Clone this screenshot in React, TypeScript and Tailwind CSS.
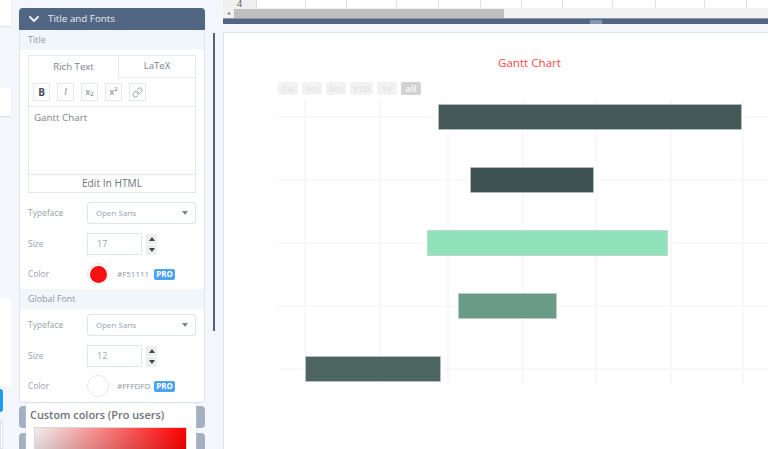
import { ChevronDown, Link } from "lucide-react"

const font = "font-['Open_Sans','Noto_Sans',sans-serif]"

function SelectRow({ value }: { value: string }) {
  return (
    <div className="flex h-[22px] w-[109px] items-center justify-between rounded-[3px] border border-[#dfe5ee] bg-white pl-[8px] pr-[7px] text-[8px] text-[#9aa1ab]">
      {value}
      <span className="h-0 w-0 border-x-[3.5px] border-t-[4px] border-x-transparent border-t-[#7d838c]" />
    </div>
  )
}

function SizeRow({ value }: { value: string }) {
  return (
    <div className="flex items-center gap-[4px]">
      <div className="flex h-[22px] w-[55px] items-center border border-[#dfe5ee] bg-white pl-[9px] text-[9px] text-[#9aa1ab]">
        {value}
      </div>
      <div className="flex flex-col gap-[1px]">
        <span className="flex h-[10px] w-[11px] items-center justify-center bg-[#eceef1]">
          <span className="h-0 w-0 border-x-[3px] border-b-[4px] border-x-transparent border-b-[#444]" />
        </span>
        <span className="flex h-[10px] w-[11px] items-center justify-center bg-[#eceef1]">
          <span className="h-0 w-0 border-x-[3px] border-t-[4px] border-x-transparent border-t-[#444]" />
        </span>
      </div>
    </div>
  )
}

function ProBadge() {
  return (
    <span className="flex h-[11px] w-[21px] items-center justify-center rounded-[2px] bg-[#4aa3f7] text-[8px] font-bold text-white">PRO</span>
  )
}

function ColorRow({ swatch, hex }: { swatch: string; hex: string }) {
  return (
    <div className="-mt-px flex h-[22px] items-center pl-[8px]">
      <span className="w-[59px] text-[8.5px] text-[#99a0a8]">Color</span>
      <span className="flex h-[22px] w-[22px] items-center justify-center rounded-full border border-[#e6e8ec] bg-white">
        <span className={`h-[17px] w-[17px] rounded-full ${swatch}`} />
      </span>
      <span className="ml-[8px] w-[37px] text-[8px] text-[#8f969f]">{hex}</span>
      <ProBadge />
    </div>
  )
}

function Field({ label, children }: { label: string; children: React.ReactNode }) {
  return (
    <div className="flex items-center pl-[8px]">
      <span className="w-[59px] text-[8.5px] text-[#99a0a8]">{label}</span>
      {children}
    </div>
  )
}

function ToolButton({ children }: { children: React.ReactNode }) {
  return (
    <span className="flex h-[18px] w-[17px] items-center justify-center border border-[#e3e7ee] bg-white text-[9px] text-[#6d7480]">
      {children}
    </span>
  )
}

function TitlePanel() {
  return (
    <div className="mt-[8px] h-[395px] w-[186px] rounded-[4px] border border-[#dfe5ee] bg-white">
      <div className="-mx-px -mt-px flex h-[22px] items-center rounded-t-[4px] bg-[#516682] pl-[7px] text-[9.8px] text-[#e8edf3]">
        <ChevronDown className="mr-[6px] h-[16px] w-[16px]" strokeWidth={3} />
        Title and Fonts
      </div>
      <div className="flex h-[20px] items-center bg-[#f1f6fb] pl-[8px] text-[9px] text-[#8f98a3]">Title</div>

      <div className="mx-[8px] mt-[5px] border border-[#e3e7ee]">
        <div className="flex h-[22px] text-[9.6px] text-[#7d838c]">
          <span className="flex w-[90px] items-center justify-center border-r border-[#e3e7ee]">Rich Text</span>
          <span className="flex flex-1 items-center justify-center border-b border-[#e3e7ee]">LaTeX</span>
        </div>
        <div className="flex h-[29px] items-center gap-[7px] border-b border-[#e3e7ee] pl-[4px]">
          <ToolButton><b className="text-[10px] text-[#444b57]">B</b></ToolButton>
          <ToolButton><i>I</i></ToolButton>
          <ToolButton>x<sub className="text-[6px]">2</sub></ToolButton>
          <ToolButton>x<sup className="text-[6px]">2</sup></ToolButton>
          <ToolButton><Link className="h-[11px] w-[11px]" strokeWidth={1.5} /></ToolButton>
        </div>
        <div className="h-[67px] pl-[5px] pt-[4px] text-[9.8px] text-[#7d838c]">Gantt Chart</div>
        <div className="flex h-[18px] items-center justify-center border-t border-[#e3e7ee] text-[10.2px] text-[#6f7680]">
          Edit In HTML
        </div>
      </div>

      <div className="mt-[9px] flex flex-col gap-[9px]">
        <Field label="Typeface"><SelectRow value="Open Sans" /></Field>
        <Field label="Size"><SizeRow value="17" /></Field>
        <ColorRow swatch="bg-[#f51111]" hex="#F51111" />
      </div>

      <div className="mt-[4px] flex h-[20px] items-center bg-[#f1f6fb] pl-[8px] text-[8.9px] text-[#8f98a3]">Global Font</div>

      <div className="mt-[5px] flex flex-col gap-[9px]">
        <Field label="Typeface"><SelectRow value="Open Sans" /></Field>
        <Field label="Size"><SizeRow value="12" /></Field>
        <ColorRow swatch="bg-[#fffdfd]" hex="#FFFDFD" />
      </div>
    </div>
  )
}

function LeftColumn() {
  return (
    <div className="flex h-full w-[11px] shrink-0 flex-col">
      <div className="h-[27px] bg-white shadow-[0_1px_1px_#dfe3e8]" />
      <div className="mt-[62px] h-[30px] bg-white shadow-[0_1px_1px_#dfe3e8]" />
      <div className="mt-[103px] flex h-[30px] items-center text-[10px] text-[#99a0a8]">
        <span className="-ml-[5px]">s</span>
      </div>
      <div className="mt-[50px] h-[93px] bg-white" />
      <div className="mt-[3px] h-[24px] w-[3px] rounded-r-[3px] bg-[#1e9bf5]" />
      <div className="mt-[8px] h-[30px] w-[3px] border border-[#dfe5ee] bg-white" />
    </div>
  )
}

function Sidebar() {
  return (
    <div className="flex h-full w-[223px] shrink-0 bg-[#f3f6fa]">
      <LeftColumn />
      <div className="ml-[8px] w-[186px]">
        <TitlePanel />
        <div className="relative mt-[3px]">
          <div className="flex flex-col gap-[5px]">
            <div className="h-[22px] rounded-[4px] bg-[#a4b0c2]" />
            <div className="h-[22px] rounded-[4px] bg-[#a4b0c2]" />
          </div>
          <div className="absolute left-[7px] top-[-3px] h-[60px] w-[170px] rounded-[3px] bg-white pl-[4px] pt-[4px] shadow-[0_0_2px_#c9ced6]">
            <div className="text-[10.9px] font-semibold leading-[15px] text-[#6d7178]">Custom colors (Pro users)</div>
            <div className="ml-[4px] mt-[5px] h-[40px] w-[153px] border border-[#d8d8d8] bg-[linear-gradient(to_right,#f3eeee,#f00)]">
              <div className="h-full w-full bg-[linear-gradient(to_bottom,transparent,#0003)]" />
            </div>
          </div>
        </div>
      </div>
      <div className="ml-[8px] mt-[33px] h-[298px] w-[2px] bg-[#516682]" />
    </div>
  )
}

function Sheet() {
  const cols = [49, 41, 50, 42, 42, 41, 41, 50, 43, 49, 42]
  return (
    <div>
      <div className="flex h-[8px] bg-white">
        <span className="flex w-[34px] items-center justify-center border-r border-[#dadada] bg-[#f0f0f0] text-[9px] leading-[8px] text-[#555]">4</span>
        {cols.map((w, i) => (
          <span key={i} className="border-r border-[#e2e2e2]" style={{ width: w }} />
        ))}
      </div>
      <div className="flex h-[10px] items-center bg-[#f1f1f1]">
        <span className="w-[11px] text-center text-[6px] text-[#777]">◂</span>
        <span className="h-[9px] w-[270px] bg-[#bfbfbf]" />
      </div>
      <div className="flex h-[6px] border-t border-[#8d9aae] bg-[#516682] pl-[367px]">
        <span className="mt-[1px] h-[4px] w-[12px] bg-[#8495ad]" />
      </div>
    </div>
  )
}

function GanttChart() {
  const grid = [305, 380, 448, 523, 596, 671, 743]
  const rows = [117, 180, 243, 306, 369]
  const bars = [
    { x: 438, y: 104, w: 304, h: 26, fill: "#435857" },
    { x: 470, y: 167, w: 124, h: 26, fill: "#3f5253" },
    { x: 427, y: 230, w: 241, h: 26, fill: "#8fe2b9" },
    { x: 458, y: 293, w: 99, h: 26, fill: "#699b88" },
    { x: 305, y: 356, w: 136, h: 26, fill: "#4d6660" },
  ]
  return (
    <svg className="block h-[349px] w-[544px]" viewBox="224 100 544 349">
      {grid.map((x) => (
        <line key={x} x1={x} x2={x} y1={100} y2={385} stroke="#f3f1f3" strokeWidth={1} />
      ))}
      {rows.map((y) => (
        <line key={y} x1={277} x2={768} y1={y} y2={y} stroke="#f5f2f3" strokeWidth={1} />
      ))}
      {bars.map((b) => (
        <g key={b.x}>
          <rect x={b.x - 2} y={b.y} width={b.w + 4} height={b.h} fill="#fff" />
          <rect x={b.x + 0.5} y={b.y + 0.5} width={b.w - 1} height={b.h - 1} fill={b.fill} stroke="#b9c9c4" strokeOpacity={0.6} strokeWidth={1} />
        </g>
      ))}
    </svg>
  )
}

function RangeButtons() {
  const items = [
    { label: "1w", w: "w-[20px]" },
    { label: "1m", w: "w-[20px]" },
    { label: "6m", w: "w-[20px]" },
    { label: "YTD", w: "w-[23px]" },
    { label: "1y", w: "w-[20px]" },
  ]
  return (
    <div className="flex gap-[4px] pl-[54px]">
      {items.map((item) => (
        <span key={item.label} className={`flex h-[13px] items-center justify-center rounded-[2px] bg-[#f2f2f2] text-[9px] font-bold text-[#e6e6e6] ${item.w}`}>
          {item.label}
        </span>
      ))}
      <span className="flex h-[13px] w-[20px] items-center justify-center rounded-[2px] bg-[#d2d2d2] text-[9px] font-bold text-[#f3f3f3]">all</span>
    </div>
  )
}

export default function App() {
  return (
    <div className={`flex h-[449px] w-[768px] overflow-hidden bg-white ${font}`}>
      <Sidebar />
      <div className="flex min-w-0 flex-1 flex-col bg-[#f3f6fa]">
        <Sheet />
        <div className="mt-[8px] h-[417px] border-l border-t border-[#dfe5f0] bg-white">
          <div className="pl-[67px] pt-[21px] text-center text-[11.6px] leading-[17px] text-[#f5494a]">Gantt Chart</div>
          <div className="mt-[11px]">
            <RangeButtons />
          </div>
          <div className="mt-[5px]">
            <GanttChart />
          </div>
        </div>
      </div>
    </div>
  )
}
